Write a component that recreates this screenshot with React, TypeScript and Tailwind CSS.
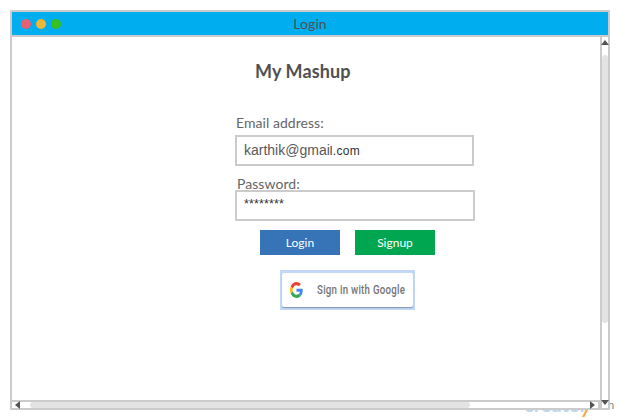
import React from "react";

function TitleBar() {
  return (
    <header className="relative flex h-[25px] shrink-0 items-center border-b-2 border-[#cbcbcb] bg-[#00aef0] pl-[9px]">
      <div className="flex gap-[5px]">
        <span className="size-[10px] rounded-full bg-[#ea6070]" />
        <span className="size-[10px] rounded-full bg-[#efb636]" />
        <span className="size-[10px] rounded-full bg-[#38c01c]" />
      </div>
      <span className="absolute inset-x-0 top-[3px] text-center text-[14px] leading-[18px] tracking-[0.1px] text-[#505052]">Login</span>
    </header>
  );
}

function GoogleLogo() {
  return (
    <svg viewBox="0 0 48 48" preserveAspectRatio="none" className="h-[16px] w-[13px] shrink-0">
      <path fill="#EA4335" d="M24 9.5c3.54 0 6.71 1.22 9.21 3.6l6.85-6.85C35.9 2.38 30.47 0 24 0 14.62 0 6.51 5.38 2.56 13.22l7.98 6.19C12.43 13.72 17.74 9.5 24 9.5z" />
      <path fill="#4285F4" d="M46.98 24.55c0-1.57-.15-3.09-.38-4.55H24v9.02h12.94c-.58 2.96-2.26 5.48-4.78 7.18l7.73 6c4.51-4.18 7.09-10.36 7.09-17.65z" />
      <path fill="#FBBC05" d="M10.53 28.59A14.5 14.5 0 0 1 9.77 24c0-1.6.27-3.14.76-4.59l-7.98-6.19A24 24 0 0 0 0 24c0 3.88.92 7.54 2.56 10.78z" />
      <path fill="#34A853" d="M24 48c6.48 0 11.93-2.13 15.89-5.81l-7.73-6c-2.15 1.45-4.92 2.3-8.16 2.3-6.26 0-11.57-4.22-13.47-9.91l-7.98 6.19C6.51 42.62 14.62 48 24 48z" />
    </svg>
  );
}

function LoginForm() {
  return (
    <main className="flex flex-1 flex-col items-start pl-[223px] pt-[22px]">
      <h1 className="ml-5 whitespace-nowrap text-[18px] font-bold leading-6 tracking-[0.1px] text-[#505052]">My Mashup</h1>
      <label className="mt-[31px] ml-px h-[21px] whitespace-nowrap text-[14px] leading-[18px] tracking-[0.05px] text-[#666668]">Email address:</label>
      <div className="flex h-[31px] w-[239px] items-center border-2 border-[#cbcbcb] pl-[7px] font-['Liberation_Sans',sans-serif] text-[14px] text-[#58585a]">
        <span className="whitespace-nowrap leading-4">karthik@gmai<span className="text-[12px] tracking-[0.3px] text-[#303032]">l.com</span></span>
      </div>
      <label className="ml-[2px] mt-[9px] h-[15px] whitespace-nowrap text-[14px] leading-[18px] tracking-[0.05px] text-[#666668]">Password:</label>
      <div className="h-[31px] w-[240px] rounded-[1px] border-2 border-[#cbcbcb] pl-[7px] pt-[4px] font-['Liberation_Sans',sans-serif] text-[12.5px] leading-4 tracking-[0.15px] text-[#303032]">
        ********
      </div>
      <div className="ml-[25px] mt-[9px] flex gap-[15px] text-[12px] text-white">
        <button className="h-[25px] w-20 bg-[#3673b7]">Login</button>
        <button className="h-[25px] w-20 bg-[#00a650]">Signup</button>
      </div>
      <button className="ml-[45px] mt-[15px] h-10 w-[135px] bg-[#c2d7f7] px-[2px] pt-[3px] pb-[3px]">
        <span className="flex h-[34px] items-center rounded-[2px] bg-white pl-[8px] shadow-[0_1px_1px_#8292ad]">
          <GoogleLogo />
          <span className="ml-[14px] origin-left scale-x-[0.81] whitespace-nowrap font-['Roboto',sans-serif] text-[12px] font-medium tracking-[0.3px] text-[#757575]">Sign in with Google</span>
        </span>
      </button>
    </main>
  );
}

function VerticalScroll() {
  return (
    <aside className="flex w-2 shrink-0 flex-col items-center border-l-2 border-[#cbcbcb] pt-[3px]">
      <svg className="h-[5px] w-2 shrink-0" viewBox="0 0 8 5"><path fill="#555" d="M4 0 8 5H0z" /></svg>
      <div className="mt-[10px] h-[268px] w-full rounded-full bg-[#e3e3e3]" />
      <svg className="relative z-10 mt-auto -mb-[5px] h-[5px] w-2 shrink-0" viewBox="0 0 8 5"><path fill="#555" d="M0 0h8L4 5z" /></svg>
    </aside>
  );
}

function HorizontalScroll() {
  return (
    <footer className="flex h-2 shrink-0">
      <div className="flex w-[588px] items-center border-t-2 border-[#cbcbcb] pl-[3px]">
        <svg className="h-2 w-[5px] shrink-0" viewBox="0 0 5 8"><path fill="#555" d="M0 4 5 0v8z" /></svg>
        <div className="ml-[10px] h-full w-[440px] rounded-full bg-[#e3e3e3]" />
        <svg className="ml-auto h-2 w-[5px] shrink-0" viewBox="0 0 5 8"><path fill="#555" d="M5 4 0 0v8z" /></svg>
        <span className="ml-[3px] h-full w-[2px] bg-[#cbcbcb]" />
      </div>
      <div className="flex-1 border-l-2 border-[#cbcbcb]" />
    </footer>
  );
}

export default function App() {
  return (
    <div className="relative h-[420px] w-[620px] overflow-hidden bg-white p-[10px] font-['Lato',sans-serif]">
      <div className="absolute left-[524px] top-[389px] flex items-baseline whitespace-nowrap text-[20px] font-bold leading-6 text-[#bdd7f1]">
        createl<span className="-ml-[4px] text-[28px] font-normal italic leading-6 text-[#f6a94c]">y</span>
      </div>
      <span className="absolute left-[608px] top-[398px] font-['Liberation_Sans',sans-serif] text-[11px] leading-[14px] text-[#777]">n</span>
      <div className="relative flex h-[400px] w-[600px] flex-col rounded-[1px] border-2 border-[#cbcbcb] bg-white">
        <TitleBar />
        <div className="flex min-h-0 flex-1">
          <LoginForm />
          <VerticalScroll />
        </div>
        <HorizontalScroll />
      </div>
    </div>
  );
}
